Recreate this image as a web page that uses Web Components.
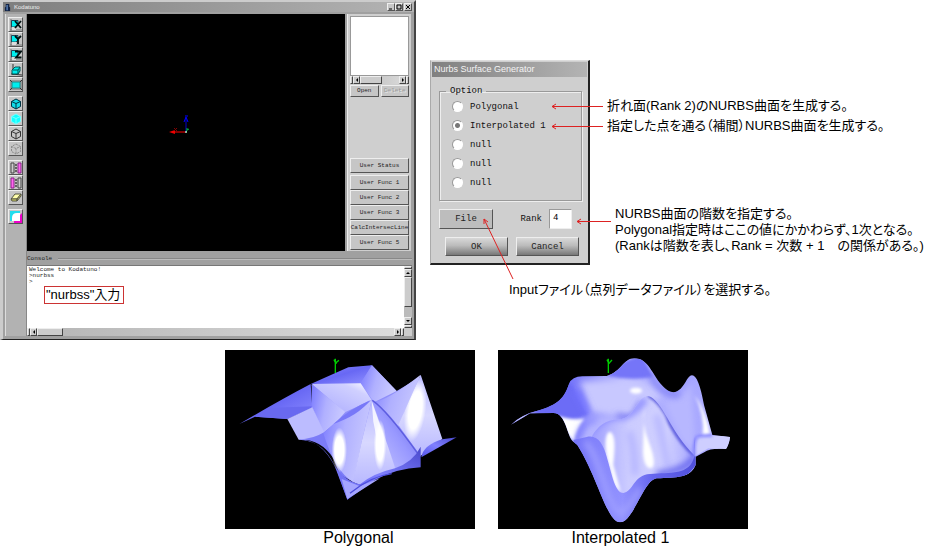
<!DOCTYPE html>
<html lang="ja">
<head>
<meta charset="utf-8">
<title>Kodatuno – Nurbs Surface Generator</title>
<style>
body{margin:0;background:#fff;color:#000;font-family:"Liberation Sans","Noto Sans CJK JP",sans-serif}
</style>
</head>
<body>
<manual-page></manual-page>
<script>
const def=(name,html,setup)=>customElements.define(name,class extends HTMLElement{
  constructor(){super();this.attachShadow({mode:'open'}).innerHTML=html;if(setup)setup(this,this.shadowRoot);}
});

/* Bevelled push button */
def('bevel-button',`<style>
:host{display:block;min-width:0}
button{display:flex;align-items:center;justify-content:center;box-sizing:border-box;width:100%;height:100%;margin:0;padding:0;font:inherit;color:#222;white-space:nowrap;
background:var(--face,#c6c6c6);border:1px solid;border-color:#eee #555 #555 #eee}
button:disabled{color:#999;text-shadow:1px 1px #e8e8e8}
</style><button type="button"><slot></slot></button>`,(h,r)=>{
  const b=r.querySelector('button');
  if(h.hasAttribute('disabled'))b.disabled=true;
  if(h.hasAttribute('label'))b.setAttribute('aria-label',h.getAttribute('label'));
});

/* Scroll bar: end caps, arrows and a thumb */
def('scroll-strip',`<style>
:host{display:flex;background:linear-gradient(90deg,#b4b4b4,#ddd)}
:host([vertical]){flex-direction:column;background:#bbb}
i{box-sizing:border-box;background:#ccc;border:1px solid;border-color:#eee #444 #444 #eee;flex:none}
.cap{width:3px}.arrow{width:7px;display:flex;align-items:center;justify-content:center}
.thumb{width:var(--thumb,22px)}.space{flex:1}
:host([vertical]) .cap{width:auto;height:3px}
:host([vertical]) .arrow{width:auto;height:8px}
:host([vertical]) .thumb{width:auto;height:var(--thumb,30px)}
svg{width:4px;height:4px;display:block;flex:none}
:host([vertical]) svg{transform:rotate(90deg)}
</style><i class="cap"></i><i class="arrow"><svg viewBox="0 0 4 4"><path d="M3 0V4L1 2Z"/></svg></i><i class="thumb"></i><span class="space"></span><i class="arrow"><svg viewBox="0 0 4 4"><path d="M1 0V4L3 2Z"/></svg></i><i class="cap"></i>`);

const cube=(f,s,d='')=>`<path d="M6 1 10.5 3.5V8.5L6 11 1.5 8.5V3.5Z" fill="${f}" stroke="${s}" ${d}/><path d="M1.500 3.500 6 5.500 10.500 3.500M6 5.500V11" fill="none" stroke="${s}" ${d}/>`;
const view=l=>`<path d="M1 0V12M0 11H12" stroke="#777"/><path d="M1.500 1.500H8V6L6 8H1.500Z" fill="#0ee" stroke="#245"/><path d="M2 8H6V11H2Z" fill="#ddd"/><path d="${l}" fill="none" stroke="#011" stroke-width="1.800"/>`;
const ICONS={
 x:view('M5 2 11 9M11 2 5 9'),y:view('M5 2 8 5 11 2M8 5V10'),z:view('M5 2.500H11L6 8.500H11.500'),
 iso:`<path d="M3 0V11M1 10 12 11" stroke="#333"/><path d="M3 5 5 3H10V7L8 10H2V6Z" fill="#0ee" stroke="#055"/><path d="M3 6H8V10M8 6 10 3" fill="none" stroke="#055"/>`,
 fit:`<path d="M0 1H12V11H0Z" fill="#999"/><path d="M2 3H10V9H2Z" fill="#0ee" stroke="#288"/><path d="M0 1 2 3M12 1 10 3M0 11 2 9M12 11 10 9" stroke="#333"/>`,
 shade:cube('#10dce8','#034'),solid:cube('#1ff','#7ff'),wire:cube('none','#333'),dash:cube('none','#888','stroke-dasharray="2 1"'),
 cutr:`<path d="M1 1H4V11H1Z" fill="#ccc" stroke="#444"/><path d="M8 1H11V11H8Z" fill="#f6e" stroke="#828"/><path d="M5 3H7M5 6H7M5 9H7" stroke="#000"/>`,
 cutl:`<path d="M1 1H4V11H1Z" fill="#f6e" stroke="#828"/><path d="M8 1H11V11H8Z" fill="#ccc" stroke="#444"/><path d="M5 3H7M5 6H7M5 9H7" stroke="#000"/>`,
 erase:`<path d="M1 7 5 2H11L7 7Z" fill="#ffa" stroke="#554"/><path d="M1 7H7V9H2ZM7 7 11 2V4L7 9Z" fill="#dd6" stroke="#554"/>`,
 color:`<path d="M0 0H10V10H0Z" fill="#2de"/><path d="M4 12V10L12 2V12Z" fill="#e0c"/><path d="M2 10V7Q2 2 7 2H10V10Z" fill="#fff"/>`
};
def('tool-bar',`<style>
:host{display:flex;flex-direction:column;gap:4px;padding:3px 3px 3px 2px;background:#b2b2b2;border-left:1px solid #ddd;border-right:1px solid #888}
div{display:flex;flex-direction:column}
bevel-button{height:15px;width:15px}
svg{display:block;width:12px;height:12px}
</style>`,(h,r)=>{
  [['x','y','z','iso','fit'],['shade','solid','wire','dash'],['cutr','cutl','erase'],['color']].forEach(g=>{
    const d=document.createElement('div');
    d.innerHTML=g.map(k=>`<bevel-button label="${k}"><svg viewBox="0 0 12 12">${ICONS[k]}</svg></bevel-button>`).join('');
    r.append(d);
  });
});

def('axis-view',`<style>:host{display:flex;background:#000;align-items:center;justify-content:center}
svg{width:100%;height:237px}</style>
<svg viewBox="0 0 318 237" role="img" aria-label="axes" fill="none">
<path d="M159 118H145" stroke="#f00"/><path d="M142 118 148 116V120Z" fill="#e00"/><path d="M147 114 150 117M150 114 147 117" stroke="#800"/>
<path d="M159 118V104" stroke="#00c"/><path d="M157 108 159 103 161 108M158 102H161" stroke="#00f"/>
<path d="M159 119 160 116 162 115M160 116V114" stroke="#0b4"/><path d="M158 118h2" stroke="#fff"/></svg>`);

def('side-panel',`<style>
:host{display:flex;flex-direction:column;box-sizing:border-box;padding:2px 2px 1px 2px;background:#cfcfcf;border-left:1px solid #eee}
.list{height:60px;background:#fff;border:1px solid #999;box-sizing:border-box}
scroll-strip{height:8px}
.pair{display:grid;grid-template-columns:1fr 1fr;gap:2px;margin-top:1px}
.pair bevel-button{height:12px}
.funcs{margin-top:auto}
.funcs bevel-button{height:15px}
.funcs bevel-button:first-child{margin-bottom:2px}
</style>
<div class="list" role="listbox" aria-label="Objects"></div><scroll-strip></scroll-strip>
<div class="pair"><bevel-button>Open</bevel-button><bevel-button disabled>Delete</bevel-button></div>
<div class="funcs"><bevel-button>User Status</bevel-button><bevel-button>User Func 1</bevel-button><bevel-button>User Func 2</bevel-button><bevel-button>User Func 3</bevel-button><bevel-button>CalcIntersecLine</bevel-button><bevel-button>User Func 5</bevel-button></div>`);

def('console-pane',`<style>
:host{display:block;padding-top:2px;position:relative}
label{display:flex;align-items:center;gap:6px;height:12px;color:#222}
label::after{content:"";flex:1;height:1px;background:#888;border-bottom:1px solid #bbb}
.box{display:grid;grid-template-columns:1fr 8px;grid-template-rows:62px 8px;background:#ccc;border-top:1px solid #777}
textarea{box-sizing:border-box;width:100%;height:100%;margin:0;border:0;padding:1px 2px;resize:none;overflow:hidden;font:inherit;line-height:6px;color:#222;background:#fff;outline:0}
.h{--thumb:26px}
mark{position:absolute;left:17px;top:35px;padding:0 3px 0 1px;border:1px solid #c33;background:#fff;color:#000;font:13px/16px "Liberation Sans","Noto Sans CJK JP",sans-serif;white-space:nowrap}
</style><label for="c">Console</label>
<div class="box"><textarea id="c" readonly spellcheck="false"></textarea><scroll-strip vertical></scroll-strip><scroll-strip class="h"></scroll-strip></div>
<mark>"nurbss"入力</mark>`,(h,r)=>{r.querySelector('textarea').value='Welcome to Kodatuno!\n>nurbss\n>';});

def('app-window',`<style>
:host{display:block;box-sizing:border-box;background:#a0a0a0;border:solid;border-width:2px 2px 1px 3px;border-color:#ccc #444 #222 #ccc;font:6px/8px "Liberation Mono",monospace}
header{display:flex;align-items:center;height:10px;padding-left:1px;gap:3px;background:linear-gradient(90deg,#7e7e7e,#b4b4b4);color:#eee}
header svg{width:7px;height:7px}
h1{font:6px/10px "Liberation Sans",sans-serif;flex:1;margin:0}
.ctl{display:flex;padding-right:2px}
.ctl bevel-button{width:8px;height:8px}.ctl bevel-button:last-child{margin-left:1px}
.ctl svg{width:6px;height:6px;display:block;fill:none;stroke:#000}
.main{display:grid;grid-template-columns:22px minmax(0,1fr);padding:2px 2px 3px 2px}
.work{display:grid;grid-template-columns:minmax(0,1fr) 64px;column-gap:2px;padding-right:1px}
.right{min-width:0}
</style>
<header><svg viewBox="0 0 8 8"><path d="M2 0H6V3L7 4V8H1V4L2 3Z" fill="#124"/><path d="M3 1H4V7H3Z" fill="#8bf"/></svg><h1>Kodatuno</h1>
<div class="ctl"><bevel-button label="Minimize"><svg viewBox="0 0 6 6"><path d="M1 5H4"/></svg></bevel-button><bevel-button label="Maximize"><svg viewBox="0 0 6 6"><path d="M1 1H5V5H1Z"/></svg></bevel-button><bevel-button label="Close"><svg viewBox="0 0 6 6"><path d="M1 1 5 5M5 1 1 5"/></svg></bevel-button></div></header>
<div class="main"><tool-bar></tool-bar><div class="right"><div class="work"><axis-view></axis-view><side-panel></side-panel></div><console-pane></console-pane></div></div>`);

def('surface-dialog',`<style>
:host{display:block;box-sizing:border-box;background:#cfcfcf;border:solid;border-width:1px 2px 2px 1px;border-color:#ddd #222 #222 #aaa;font:9px/12px "Liberation Mono",monospace;color:#111}
h2{margin:1px;padding-left:2px;font:9px/15px "Liberation Sans",sans-serif;color:#f4f4f4;background:linear-gradient(90deg,#808080,#b4b4b4)}
fieldset{margin:8px 6px 0 8px;padding:0 0 8px 12px;border:1px solid #999;box-shadow:inset 1px 1px #eee,1px 1px #eee;min-width:0}
legend{margin-left:-6px;padding:0 4px}
label{display:flex;align-items:center;gap:7px;height:19px}
input[type=radio]{appearance:none;box-sizing:border-box;margin:0;width:11px;height:11px;border:1px solid;border-color:#999 #fff #fff #999;border-radius:50%;background:#fff}
input[type=radio]:checked{background:radial-gradient(circle,#777 0 2px,#fff 3px)}
.row{display:flex;align-items:center;justify-content:space-between;padding:8px 16px 0 8px}
.row bevel-button{width:54px;height:20px;--face:#bdbdbd}
.row input{box-sizing:border-box;width:23px;height:20px;border:1px solid #aaa;border-color:#999 #eee #eee #999;background:#fff;font:inherit;padding:0 0 2px 3px}
.acts{display:grid;grid-template-columns:1fr 1fr;gap:8px;padding:8px 9px 7px 14px}
.acts bevel-button{height:19px;--face:linear-gradient(#d8d8d8,#bbb 45%,#777)}
</style><h2>Nurbs Surface Generator</h2>
<fieldset><legend>Option</legend>
<label><input type="radio" name="o">Polygonal</label><label><input type="radio" name="o" checked>Interpolated 1</label><label><input type="radio" name="o">null</label><label><input type="radio" name="o">null</label><label><input type="radio" name="o">null</label></fieldset>
<div class="row"><bevel-button>File</bevel-button><label>Rank<input type="text" value="4"></label></div>
<div class="acts"><bevel-button>OK</bevel-button><bevel-button>Cancel</bevel-button></div>`);

/* Dialog with its explanatory notes and the arrows lying over both */
def('callout-board',`<style>
:host{display:grid;grid-template-columns:160px minmax(0,1fr);align-content:start;position:relative;font-size:13px;line-height:16px;font-feature-settings:"palt";white-space:nowrap}
p{margin:0}
.notes{padding:38px 0 0 17px;display:flex;flex-direction:column;gap:4px}
.rank{margin:68px 0 0 8px}
.file{grid-column:1/-1;padding:17px 0 0 79px}
svg{position:absolute;left:0;top:0;width:190px;height:230px;fill:none;stroke:#d22;pointer-events:none}
</style><surface-dialog></surface-dialog>
<div class="notes"><p>折れ面(Rank 2)のNURBS曲面を生成する。</p><p>指定した点を通る（補間）NURBS曲面を生成する。</p>
<p class="rank">NURBS曲面の階数を指定する。<br>Polygonal指定時はここの値にかかわらず、1次となる。<br>(Rankは階数を表し、Rank = 次数 + 1　の関係がある。)</p></div>
<p class="file">Inputファイル（点列データファイル）を選択する。</p>
<svg viewBox="0 0 190 230" aria-hidden="true"><path d="M173 46.500H122M126 44 122 46.500 126 49M173 66.500H122M126 64 122 66.500 126 69M181 161.500H147M151 159 147 161.500 151 164M83 219 54 159M54 164V159L58 162"/></svg>`);

def('surface-figure',`<style>
:host{display:block}figure{margin:0}
::slotted(svg){display:block;width:100%;background:#000}
figcaption{font-size:16px;line-height:18px;text-align:center;padding-left:16px}
:host([flush]) figcaption{padding:0 6px 0 0}
</style><figure><slot></slot><figcaption><slot name="caption"></slot></figcaption></figure>`);

def('manual-page',`<style>
:host{display:block}
.top{display:grid;grid-template-columns:minmax(0,416fr) minmax(0,509fr);column-gap:14px}
callout-board{margin-top:60px}
.figs{display:grid;grid-template-columns:minmax(0,1fr) minmax(0,1fr);gap:23px;width:55.7%;margin:10px 0 0 24%}
</style>
<div class="top"><app-window></app-window><callout-board></callout-board></div>
<div class="figs">
<surface-figure><svg viewBox="15 15 750 537" role="img" aria-label="Polygonal surface">
<defs>
<linearGradient id="a1" x1="0" y1="0" x2="1" y2="1"><stop stop-color="#8a8aff"/><stop offset=".5" stop-color="#6868f4"/><stop offset="1" stop-color="#9090ff"/></linearGradient>
<linearGradient id="a2" x1="0" y1="1" x2="1" y2="0"><stop stop-color="#a8a8ff"/><stop offset=".75" stop-color="#d0d0ff"/><stop offset="1" stop-color="#fff"/></linearGradient>
<linearGradient id="a3" x1="0" y1="0" x2="1" y2=".3"><stop stop-color="#7878ff"/><stop offset=".5" stop-color="#b0b0ff"/><stop offset="1" stop-color="#c8c8ff"/></linearGradient>
<linearGradient id="a4" x1="0" y1="0" x2="0" y2="1"><stop stop-color="#b8b8ff"/><stop offset=".5" stop-color="#d8d8ff"/><stop offset="1" stop-color="#b8b8ff"/></linearGradient>
<linearGradient id="a5" x1="0" y1="1" x2="1" y2="0"><stop stop-color="#c8c8ff"/><stop offset=".5" stop-color="#9898ff"/><stop offset="1" stop-color="#5858dd"/></linearGradient>
<linearGradient id="a6" x1="0" y1="1" x2="1" y2="0"><stop stop-color="#5555e8"/><stop offset=".5" stop-color="#8080ff"/><stop offset="1" stop-color="#4848cc"/></linearGradient>
<radialGradient id="aw"><stop stop-color="#fff"/><stop offset=".6" stop-color="#fff"/><stop offset="1" stop-color="#fff" stop-opacity="0"/></radialGradient>
<clipPath id="ac"><path d="M602 89 667 282 630 308 602 333 535 240Z"/></clipPath>
</defs>
<path d="M346 84V41M346 52 342 44M348 56 351 50 357 46" stroke="#0c0" stroke-width="4" fill="none"/>
<path d="M275 120 456 61 530 138 602 95V333L525 375 400 412 312 262Z" fill="#8f8ffa"/>
<path d="M58 237 Q180 165 272 117L277 188 202 222 105 215Z" fill="url(#a1)"/>
<path d="M145 189 277 184V188L202 222 105 215Z" fill="#6969f0"/>
<path d="M272 117 385 67 456 61 422 115Z" fill="url(#a1)"/>
<path d="M456 61 530 138 462 172 422 115Z" fill="url(#a3)"/>
<path d="M275 117 422 115 455 165 375 202Z" fill="url(#a2)"/>
<path d="M275 117 376 201 345 236 312 268 275 187Z" fill="url(#a3)"/>
<path d="M202 222 277 187 314 265Q280 290 236 284Z" fill="#bcbcff"/>
<path d="M236 284Q280 282 312 262L350 230 400 410 360 390 340 340Q300 280 236 284Z" fill="#7c7cf8"/>
<path d="M340 237Q415 205 455 165L425 290 400 412Q345 380 310 265Z" fill="url(#a3)"/>
<path d="M340 237Q385 195 450 166 415 212 340 237Z" fill="#7878f8"/>
<path d="M455 165 462 170Q500 168 602 89L535 244Q500 195 462 170Z" fill="url(#a3)"/>
<path d="M602 89 667 282 630 308 602 333 535 240Z" fill="url(#a4)"/>
<g clip-path="url(#ac)"><ellipse cx="586" cy="195" rx="32" ry="95" fill="url(#aw)" transform="rotate(8 586 195)"/></g>
<path d="M455 165Q490 190 535 245L603 333 525 374Z" fill="url(#a5)"/>
<path d="M457 166Q500 195 595 328" stroke="#5d5de0" stroke-width="4" fill="none"/>
<path d="M455 165Q500 290 527 374L420 420 398 411 425 290Z" fill="url(#a4)"/>
<ellipse cx="358" cy="315" rx="23" ry="68" fill="url(#aw)"/><ellipse cx="480" cy="300" rx="19" ry="76" fill="url(#aw)"/>
<path d="M455 167 482 245 474 300 460 230Z" fill="#fff" opacity=".8"/>
<path d="M604 337Q610 300 667 283L710 277Z" fill="url(#a6)"/>
<path d="M602 305V367Q530 370 465 405L382 464 345 360Q365 410 420 418Q460 385 525 370Q580 350 602 305Z" fill="url(#a6)"/>
<path d="M236 284Q300 285 335 345Q365 410 430 420L382 464 345 365Q300 280 236 284Z" fill="#7373f5"/>
<path d="M382 462 365 402 418 423 480 400Z" fill="#a5a5ff"/><path d="M390 445Q450 395 515 386" stroke="#4c4cdb" stroke-width="4" fill="none"/>
</svg><span slot="caption">Polygonal</span></surface-figure>
<surface-figure flush><svg viewBox="24 15 750 537" role="img" aria-label="Interpolated surface">
<defs>
<linearGradient id="b1" x1="0" x2="1"><stop stop-color="#8888ff"/><stop offset=".3" stop-color="#7878fa"/><stop offset=".5" stop-color="#c0c0ff"/><stop offset=".75" stop-color="#a0a0ff"/><stop offset="1" stop-color="#c8c8ff"/></linearGradient>
<linearGradient id="b2" x1="0" x2="1"><stop stop-color="#7474f8"/><stop offset=".4" stop-color="#9292ff"/><stop offset=".65" stop-color="#6565ee"/><stop offset="1" stop-color="#5050dc"/></linearGradient>
<linearGradient id="b3" x1="0" x2="1"><stop stop-color="#9e9eff"/><stop offset=".35" stop-color="#ccccff"/><stop offset=".7" stop-color="#d0d0ff"/><stop offset="1" stop-color="#9c9cff"/></linearGradient>
<filter id="s" filterUnits="userSpaceOnUse" x="24" y="15" width="750" height="537"><feGaussianBlur stdDeviation="9"/></filter>
<filter id="t" filterUnits="userSpaceOnUse" x="24" y="15" width="750" height="537"><feGaussianBlur stdDeviation="4"/></filter>
<clipPath id="bc"><path d="M63 239Q95 208 150 195C215 175 225 150 237 117Q246 93 280 94L350 93C395 80 400 40 433 40C475 40 487 90 515 120C550 160 572 138 590 105C610 70 628 100 642 180L667 270 720 276Q717 300 708 312C680 310 660 310 640 323L617 335V360C600 400 560 397 500 400C460 405 430 532 390 532C350 530 325 400 262 300L250 290C230 275 230 205 190 204L120 205Z"/></clipPath>
<clipPath id="bf"><path d="M305 275C330 235 350 225 395 222 435 215 440 153 475 153 518 165 540 260 614 332V390H480C425 400 435 440 400 444C340 440 370 285 305 275Z"/></clipPath>
</defs>
<path d="M355 84V41M355 52 351 44M357 56 361 50 366 45" stroke="#0c0" stroke-width="4" fill="none"/>
<g clip-path="url(#bc)">
<rect x="24" y="15" width="750" height="537" fill="url(#b1)"/>
<path d="M80 235 240 110Q275 170 295 210L230 225 150 205Z" fill="#6c6cf6" filter="url(#t)"/>
<path d="M270 110 420 105Q490 110 520 160L450 175 420 215 300 200Z" fill="#c8c8ff" filter="url(#s)"/>
<path d="M350 92Q420 108 490 96L455 30 400 50Z" fill="#7474f8" filter="url(#t)"/>
<ellipse cx="438" cy="137" rx="18" ry="9" fill="#fff" filter="url(#t)"/>
<path d="M60 240 90 213 140 201 120 215Z" fill="#ccf" filter="url(#t)"/>
<path d="M205 213Q240 226 284 221Q260 250 252 292L225 260Z" fill="#fff" filter="url(#t)"/>
<path d="M260 135Q280 170 296 205" stroke="#7272ff" stroke-width="18" fill="none" filter="url(#s)"/>
<path d="M262 292 300 215 450 215 470 300 340 400Z" fill="#b4b4ff" filter="url(#s)"/>
<path d="M262 290Q270 230 320 225" stroke="#8484ff" stroke-width="12" fill="none" filter="url(#s)"/>
<path d="M380 211Q415 220 430 215L455 170" stroke="#6464ee" stroke-width="12" fill="none" filter="url(#s)"/>
<path d="M515 160Q560 180 605 110L620 330 570 290Z" fill="#b7b7ff" filter="url(#s)"/>
<path d="M480 85Q505 150 570 150" stroke="#7878f5" stroke-width="12" fill="none" filter="url(#s)"/>
<path d="M614 150Q650 200 660 269L638 274Q645 210 614 150Z" fill="#fff" filter="url(#t)"/>
<g clip-path="url(#bf)">
<path d="M300 140H630V460H300Z" fill="url(#b3)"/>
<path d="M300 260Q350 205 400 215 440 200 465 160" stroke="#8f8fff" stroke-width="22" fill="none" filter="url(#s)"/>
<path d="M475 150Q520 175 540 235 575 300 614 331" stroke="#5454dc" stroke-width="11" fill="none" filter="url(#t)"/>
<path d="M418 260Q435 310 435 390" stroke="#b6b6ff" stroke-width="20" fill="none" filter="url(#s)"/>
<path d="M500 210Q520 290 535 370" stroke="#b8b8ff" stroke-width="20" fill="none" filter="url(#s)"/>
<path d="M614 330Q600 375 500 388" stroke="#6464ee" stroke-width="18" fill="none" filter="url(#s)"/>
<path d="M358 260C380 265 374 320 370 360L392 440Q370 430 360 370C345 330 340 270 358 260Z" fill="#fff" filter="url(#t)"/>
<path d="M463 180Q455 240 476 290C492 330 500 370 480 370Q461 365 459 320Z" fill="#fff" filter="url(#t)"/>
</g>
<path d="M250 285 290 276C325 268 340 300 350 335C365 385 375 444 400 444C430 440 430 390 480 387C540 382 600 392 613 334V275L618 360 580 405 480 410 430 540 360 540Z" fill="url(#b2)"/>
<path d="M285 290C330 330 350 490 392 505Q425 480 450 430" stroke="#a0a0ff" stroke-width="16" fill="none" filter="url(#s)"/>
<path d="M614 334Q610 300 620 275Q660 268 725 275L708 314 655 310Z" fill="#ceceff"/>
<path d="M614 335Q609 300 620 276Q640 270 667 272" stroke="#7d7dff" stroke-width="7" fill="none" filter="url(#t)"/>
</g>
</svg><span slot="caption">Interpolated 1</span></surface-figure>
</div>`);
</script>
</body>
</html>
